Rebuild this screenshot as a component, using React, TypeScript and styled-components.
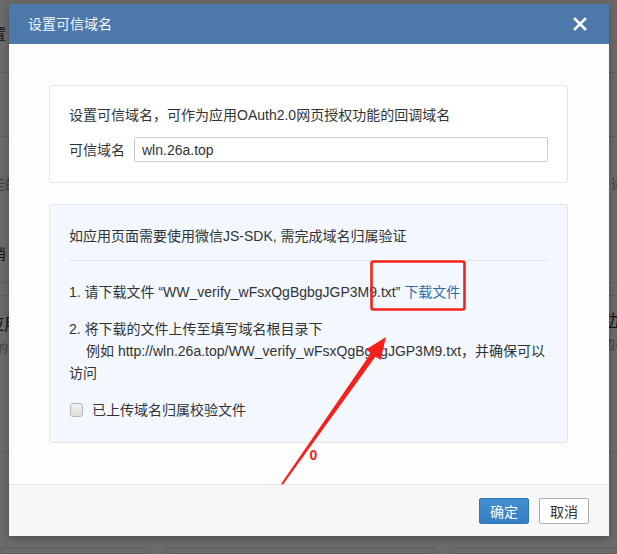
import styled, { createGlobalStyle } from "styled-components";

const GlobalStyle = createGlobalStyle`
  html, body {
    margin: 0;
    padding: 0;
    background: #6b6b6b;
  }
  * {
    box-sizing: border-box;
  }
`;

const FONT = `"Liberation Sans", "Noto Sans CJK SC", sans-serif`;

const App = () => {
  return (
    <>
      <GlobalStyle />
      <Screen>
        <Backdrop>
          <BackRow $h={73}>
            <EdgeText $side="left" $top={25} $shift={22}>设置</EdgeText>
          </BackRow>
          <BackRow $h={64} />
          <BackRow $h={146}>
            <EdgeColumn>
              <EdgeText $side="left" $top={38} $shift={23} $muted>功能的“</EdgeText>
              <EdgeText $side="left" $top={52} $shift={22}>取消</EdgeText>
            </EdgeColumn>
            <EdgeColumn>
              <EdgeText $side="right" $top={38} $shift={22} $muted>适配</EdgeText>
            </EdgeColumn>
          </BackRow>
          <BackRow $h={13} />
          <BackRow $h={156}>
            <EdgeColumn>
              <EdgeText $side="left" $top={20} $shift={12} $size={16}>应用</EdgeText>
              <EdgeText $side="left" $top={6} $shift={16} $size={12} $muted>人的</EdgeText>
            </EdgeColumn>
            <EdgeColumn>
              <EdgeText $side="right" $top={16} $shift={18} $size={16} $under>功能</EdgeText>
              <EdgeText $side="right" $top={6} $shift={16} $size={12} $muted>边栏</EdgeText>
            </EdgeColumn>
          </BackRow>
          <BottomCards>
            <BackCard $w={151} />
            <BackCard $w={270} />
            <BackCard $w={168} />
          </BottomCards>
        </Backdrop>

        <Overlay>
          <Modal>
            <Header>
              <HeaderTitle>设置可信域名</HeaderTitle>
              <CloseButton aria-label="关闭">
                <svg width="14" height="14" viewBox="0 0 14 14">
                  <path d="M2 2 L12 12 M12 2 L2 12" stroke="#fff" strokeWidth="2.6" strokeLinecap="square" />
                </svg>
              </CloseButton>
            </Header>

            <Body>
              <Panel>
                <Line>设置可信域名，可作为应用OAuth2.0网页授权功能的回调域名</Line>
                <FieldRow>
                  <FieldLabel>可信域名</FieldLabel>
                  <TextInput defaultValue="wln.26a.top" />
                </FieldRow>
              </Panel>

              <Panel $tinted>
                <Line>如应用页面需要使用微信JS-SDK, 需完成域名归属验证</Line>
                <Divider />
                <Step>
                  1. 请下载文件 “WW_verify_wFsxQgBgbgJGP3M9.txt” <Link href="#">下载文件</Link>
                </Step>
                <Step $gap={16}>
                  2. 将下载的文件上传至填写域名根目录下
                  <br />
                  <Indent>例如 http://wln.26a.top/WW_verify_wFsxQgBgbgJGP3M9.txt，并确保可以</Indent>
                  <br />
                  访问
                </Step>
                <CheckRow>
                  <CheckBox />
                  <span>已上传域名归属校验文件</span>
                </CheckRow>
              </Panel>
            </Body>

            <Footer>
              <Button $primary>确定</Button>
              <Button>取消</Button>
            </Footer>
          </Modal>
        </Overlay>

        <Annotation width="617" height="554" viewBox="0 0 617 554">
          <rect x="371.5" y="261.5" width="93" height="48" rx="2" fill="none" stroke="#f5221b" strokeWidth="2.6" />
          <polygon
            points="281,484 371,353 366,349.5 386,337 380.5,360 375.5,356.5 283,484.5"
            fill="#f5221b"
          />
          <text x="309.5" y="459.5" fill="#f5221b" fontSize="14" fontWeight="700" fontFamily="Liberation Sans, sans-serif">
            0
          </text>
        </Annotation>
      </Screen>
    </>
  );
};

export default App;

const Screen = styled.div`
  position: relative;
  width: 617px;
  height: 554px;
  overflow: hidden;
  font-family: ${FONT};
`;

const Backdrop = styled.div`
  display: flex;
  flex-direction: column;
  width: 617px;
  height: 554px;
  background: #ffffff;
`;

const BackRow = styled.div<{ $h?: number }>`
  display: flex;
  justify-content: space-between;
  height: ${({ $h }) => ($h ? `${$h}px` : "auto")};
  border-bottom: 1px solid #e2e2e2;
`;

const EdgeColumn = styled.div`
  display: flex;
  flex-direction: column;
`;

const EdgeText = styled.span<{
  $side: "left" | "right";
  $top: number;
  $shift: number;
  $size?: number;
  $muted?: boolean;
  $under?: boolean;
}>`
  display: block;
  margin-top: ${({ $top }) => $top}px;
  margin-left: ${({ $side, $shift }) => ($side === "left" ? `-${$shift}px` : "0")};
  margin-right: ${({ $side, $shift }) => ($side === "right" ? `-${$shift}px` : "0")};
  font-size: ${({ $size }) => $size ?? 14}px;
  line-height: 18px;
  white-space: nowrap;
  color: ${({ $muted }) => ($muted ? "#999999" : "#1b2b3d")};
  text-decoration: ${({ $under }) => ($under ? "underline" : "none")};
`;

const BottomCards = styled.div`
  display: flex;
  gap: 14px;
  padding-top: 95px;
  flex: 1;
`;

const BackCard = styled.div<{ $w: number }>`
  width: ${({ $w }) => $w}px;
  border: 1px solid #dddddd;
  border-radius: 4px;
`;

const Overlay = styled.div`
  position: absolute;
  inset: 0;
  background: rgba(0, 0, 0, 0.58);
  padding: 4px 0 0 9px;
`;

const Modal = styled.div`
  width: 600px;
  background: #fdfdfd;
  box-shadow: 0 2px 8px rgba(0, 0, 0, 0.3);
  display: flex;
  flex-direction: column;
`;

const Header = styled.div`
  height: 40px;
  background: #4c79a9;
  display: flex;
  align-items: center;
  justify-content: space-between;
  padding: 0 22px 0 19px;
`;

const HeaderTitle = styled.div`
  color: #f4f7fb;
  font-size: 14px;
  line-height: 20px;
`;

const CloseButton = styled.button`
  border: 0;
  background: none;
  padding: 0;
  width: 14px;
  height: 14px;
  display: flex;
  cursor: pointer;
`;

const Body = styled.div`
  display: flex;
  flex-direction: column;
  gap: 21px;
  padding: 41px 41px 41px 40px;
`;

const Panel = styled.div<{ $tinted?: boolean }>`
  display: flex;
  flex-direction: column;
  padding: ${({ $tinted }) => ($tinted ? "21px 19px 22px" : "19px 19px 20px")};
  border: 1px solid ${({ $tinted }) => ($tinted ? "#dfe6ec" : "#e5e5e5")};
  border-radius: 3px;
  background: ${({ $tinted }) => ($tinted ? "#f2f8fe" : "#ffffff")};
  color: #333333;
  font-size: 14px;
`;

const Line = styled.div`
  line-height: 20px;
`;

const FieldRow = styled.div`
  display: flex;
  align-items: center;
  gap: 9px;
  margin-top: 12px;
`;

const FieldLabel = styled.label`
  line-height: 20px;
  white-space: nowrap;
`;

const TextInput = styled.input`
  flex: 1;
  height: 25px;
  border: 1px solid #cccccc;
  border-radius: 2px;
  padding: 0 7px;
  font-family: ${FONT};
  font-size: 14px;
  color: #333333;
  background: #ffffff;
  outline: none;
`;

const Divider = styled.div`
  height: 1px;
  background: #e1e6ea;
  margin-top: 14px;
`;

const Step = styled.div<{ $gap?: number }>`
  margin-top: ${({ $gap }) => $gap ?? 21}px;
  line-height: ${({ $gap }) => ($gap ? 22 : 20)}px;
  white-space: nowrap;
`;

const Indent = styled.span`
  padding-left: 17px;
`;

const Link = styled.a`
  color: #2f6ca8;
  text-decoration: none;
`;

const CheckRow = styled.label`
  display: flex;
  align-items: center;
  gap: 9px;
  margin-top: 16px;
  line-height: 20px;
  padding-left: 1px;
`;

const CheckBox = styled.span`
  width: 13px;
  height: 14px;
  border: 1px solid #b5b5b5;
  border-radius: 3px;
  background: linear-gradient(#f4f4f4, #dcdcdc);
`;

const Footer = styled.div`
  display: flex;
  justify-content: flex-end;
  gap: 10px;
  padding: 13px 20px 12px;
  border-top: 1px solid #e4e4e4;
  background: #f7f7f7;
`;

const Button = styled.button<{ $primary?: boolean }>`
  width: 50px;
  height: 26px;
  padding: 0;
  border-radius: 2px;
  font-family: ${FONT};
  font-size: 14px;
  cursor: pointer;
  border: 1px solid ${({ $primary }) => ($primary ? "#2f76b6" : "#adadad")};
  background: ${({ $primary }) => ($primary ? "linear-gradient(#428fd1, #3580c2)" : "#ffffff")};
  color: ${({ $primary }) => ($primary ? "#ffffff" : "#333333")};
`;

const Annotation = styled.svg`
  position: absolute;
  inset: 0;
  pointer-events: none;
`;
